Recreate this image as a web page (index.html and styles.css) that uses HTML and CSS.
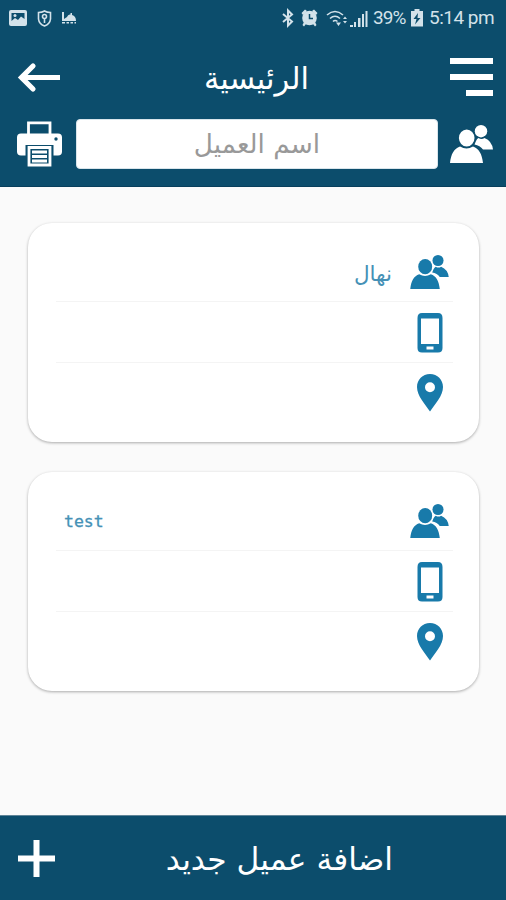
FILE: index.html
```html
<!doctype html>
<html lang="ar">
    <head>
        <meta charset="UTF-8" />
        <meta name="viewport" content="width=device-width, initial-scale=1.0" />
        <title>الرئيسية</title>
        <link rel="stylesheet" href="styles.css">
    </head>
    <body>
        <svg class="defs">
            <symbol id="people" viewBox="0 0 43 38">
                <circle cx="31" cy="6.2" r="6.2" />
                <path d="M26 16Q27 13.500 28.500 13Q31.500 15 34.500 13Q42 16 43 24.500H33Q30 20.500 24.500 19.500Z" />
                <ellipse cx="16.700" cy="13" rx="7.800" ry="8.600" />
                <path d="M0 38C1 29 4 23.500 10 21.500Q16.500 25.500 23 21.500C29 23.500 32 29 33 38Z" />
            </symbol>
            <symbol id="phone" viewBox="0 0 26 40">
                <path fill-rule="evenodd" d="M5 0H21Q25.500 0 25.500 5V35Q25.500 39.500 21 39.500H5Q.5 39.500 .5 35V5Q.5 0 5 0ZM4 5.500V31H22V5.500ZM9.500 33.500V36.500H16.500V33.500Z" />
            </symbol>
            <symbol id="pin" viewBox="0 0 26 38">
                <path fill-rule="evenodd" d="M13 0C5.500 0 0 5.700 0 13C0 22 8 30 13 37.500C18 30 26 22 26 13C26 5.700 20.500 0 13 0ZM13 8.300A5 5 0 1 1 13 18.300A5 5 0 1 1 13 8.300Z" />
            </symbol>
        </svg>

        <header class="header">
            <div class="status">
                <div class="status-left">
                    <svg width="18" height="17" viewBox="0 0 18 17">
                        <path fill-rule="evenodd" d="M2 0H16Q18 0 18 2V14Q18 16 16 16H2Q0 16 0 14V2Q0 0 2 0ZM2.500 3V11L6 8L9 10L12 6.500L15.500 9V3Z" />
                        <circle cx="6" cy="5.500" r="1.500" />
                    </svg>
                    <svg width="15" height="17" viewBox="0 0 15 17">
                        <path class="line" d="M7.500 1Q10 2.500 13.500 2.500V9Q13 14 7.500 16Q2 14 1.500 9V2.500Q5 2.500 7.500 1Z" />
                        <circle class="line" cx="7.500" cy="6.500" r="2" />
                        <path class="line" d="M7.500 8.500V13" />
                    </svg>
                    <svg width="15" height="12" viewBox="0 0 15 12">
                        <path d="M0 0H2V7L5 5Q6 2 8.500 2.500V1H10V3Q14 4 14 9H0ZM0 10H3V11.500H0ZM4.500 10H7V11.500H4.500ZM8.500 10H11V11.500H8.500ZM12.500 10H14V11.500H12.500Z" />
                    </svg>
                </div>
                <div class="status-right">
                    <svg class="bluetooth" width="12" height="18" viewBox="0 0 12 18">
                        <path d="M1 5L10 12.500L6 16.500V1.500L10 5.500L1 13" />
                    </svg>
                    <svg class="alarm" width="17" height="18" viewBox="0 0 17 18">
                        <path d="M.5 4L4 .5L6 2L2 6ZM16.500 4L13 .5L11 2L15 6ZM3 13L5 15L3 17.500L1.500 16ZM14 13L12 15L14 17.500L15.500 16Z" />
                        <circle cx="8.500" cy="9" r="7.300" />
                        <path class="hand" d="M8.500 5V9.500H12" />
                    </svg>
                    <svg class="wifi" width="22" height="17" viewBox="0 0 22 17">
                        <path class="line" d="M1 5Q9-2 17 5M4 8.500Q9 4 14 8.500M7 11.500Q9 9.500 11.500 11.500" />
                        <path d="M10 12.500L12.500 16L15 12.500ZM17 9L19 6.500L21 9ZM17 11H21L19 13.500Z" />
                    </svg>
                    <svg class="signal" width="18" height="17" viewBox="0 0 18 17">
                        <path d="M0 15H3V17H0ZM4 12H6V17H4ZM8 8H10.500V17H8ZM12 4H14V17H12ZM15.500 1H17.500V17H15.500Z" />
                    </svg>
                    <span class="percent">39%</span>
                    <svg class="battery" width="12" height="18" viewBox="0 0 12 18">
                        <path fill-rule="evenodd" d="M3.500 0H8.500V2H12V17.500H0V2H3.500ZM7 4L2.500 10H5.500L4 15.500L9.500 9H6.500Z" />
                    </svg>
                    <span class="time">5:14 pm</span>
                </div>
            </div>
            <div class="title-bar">
                <svg class="back" width="43" height="29" viewBox="0 0 43 29">
                    <path d="M15 3L3.500 14.500L15 26" stroke-linecap="round" />
                    <path d="M4 14.500H42" />
                </svg>
                <h1 class="title" dir="rtl">الرئيسية</h1>
                <div class="menu">
                    <i></i>
                    <i></i>
                    <i></i>
                </div>
            </div>
            <div class="search">
                <svg class="printer" width="45" height="46" viewBox="0 0 45 46">
                    <path class="frame" d="M11.500 13V1.800H33V13" />
                    <rect y="12.500" width="45" height="22" rx="4" />
                    <circle class="dark" cx="39" cy="18" r="1.700" />
                    <path class="dark" d="M8.500 24H36.500V35H8.500Z" />
                    <path class="frame" d="M12 26.500H33V44H12Z" />
                    <path class="lines" d="M15 31H30M15 35.500H30M15 40H30" />
                </svg>
                <div class="search-input" dir="rtl">اسم العميل</div>
                <svg class="people"><use href="#people" /></svg>
            </div>
        </header>

        <main class="list">
            <section class="card">
                <div class="row">
                    <span class="name" dir="rtl">نهال</span>
                    <svg class="people"><use href="#people" /></svg>
                </div>
                <div class="row">
                    <svg class="phone"><use href="#phone" /></svg>
                </div>
                <div class="row">
                    <svg class="pin"><use href="#pin" /></svg>
                </div>
            </section>
            <section class="card">
                <div class="row">
                    <span class="name name-latin">test</span>
                    <svg class="people"><use href="#people" /></svg>
                </div>
                <div class="row">
                    <svg class="phone"><use href="#phone" /></svg>
                </div>
                <div class="row">
                    <svg class="pin"><use href="#pin" /></svg>
                </div>
            </section>
        </main>

        <footer class="footer">
            <svg width="37" height="37" viewBox="0 0 37 37">
                <path d="M15.500 0H21.500V15.500H37V21.500H21.500V37H15.500V21.500H0V15.500H15.500Z" />
            </svg>
            <div class="add" dir="rtl">اضافة عميل جديد</div>
        </footer>
    </body>
</html>
```
FILE: styles.css
```css
* {
    box-sizing: border-box;
}

body {
    margin: 0;
    height: 900px;
    display: flex;
    flex-direction: column;
    overflow: hidden;
    background: #fafafa;
    font-family: "DejaVu Sans", sans-serif;
}

svg {
    display: block;
    flex: none;
    overflow: visible;
    fill: currentColor;
}

.defs {
    display: none;
}

.header {
    height: 187px;
    background: #0c4d6c;
    color: #fff;
    border-bottom: 1px solid #083f5c;
}

.status {
    display: flex;
    justify-content: space-between;
    height: 36px;
    padding: 0 10px 0 9px;
    color: #d3e2ea;
    font-family: Roboto, sans-serif;
    font-size: 19px;
}

.status-left,
.status-right {
    display: flex;
    align-items: center;
    height: 36px;
}

.status-left {
    gap: 10px;
}

.status .line {
    fill: none;
    stroke: currentColor;
    stroke-width: 1.6;
}

.bluetooth {
    fill: none;
    stroke: currentColor;
    stroke-width: 2;
    margin-right: 7px;
}

.alarm {
    margin-right: 8px;
}

.alarm .hand {
    fill: none;
    stroke: #0c4d6c;
    stroke-width: 1.5;
}

.wifi {
    margin-right: 2px;
}

.signal {
    margin-right: 5px;
}

.percent,
.time {
    white-space: nowrap;
    line-height: 36px;
}

.percent {
    width: 34px;
    letter-spacing: -0.9px;
    margin-right: 4px;
}

.time {
    width: 67px;
    margin-left: 6px;
    letter-spacing: -0.5px;
}

.title-bar {
    display: flex;
    align-items: center;
    justify-content: space-between;
    height: 82px;
    padding: 0 13px 0 18px;
}

.back {
    fill: none;
    stroke: currentColor;
    stroke-width: 5.2;
}

.title {
    margin: 0;
    padding: 3px 0 0 2px;
    font-size: 30.5px;
    font-weight: normal;
    line-height: 40px;
}

.menu {
    display: flex;
    flex-direction: column;
    align-items: flex-end;
    gap: 10px;
    width: 43px;
}

.menu i {
    width: 43px;
    height: 6px;
    background: #fff;
}

.menu i:last-child {
    width: 27px;
}

.search {
    display: flex;
    align-items: center;
    height: 52px;
    padding: 0 13px 0 17px;
}

.search-input {
    flex: 1;
    height: 50px;
    margin: 0 12px 0 14px;
    border: 1px solid #d9e5eb;
    border-radius: 4px;
    background: #fff;
    color: #999;
    font-size: 26.3px;
    line-height: 49px;
    text-align: center;
}

.printer .frame,
.printer .lines {
    fill: none;
    stroke: currentColor;
    stroke-width: 2.8;
}

.printer .dark {
    fill: #0c4d6c;
}

.people {
    width: 43px;
    height: 38px;
}

.list {
    flex: 1;
    display: flex;
    flex-direction: column;
    gap: 30px;
    padding: 36px 27px 0 28px;
}

.card {
    height: 219px;
    padding: 18px 26px 0 28px;
    border-radius: 24px;
    background: #fff;
    box-shadow: 0 1px 3px rgba(0, 0, 0, 0.32);
    color: #187aaa;
}

.row {
    display: flex;
    align-items: center;
    justify-content: flex-end;
    height: 61px;
    padding: 2px 4px 0 0;
    border-bottom: 1px solid #f4f4f4;
}

.row:last-child {
    height: 57px;
    border-bottom: 0;
}

.row .people {
    width: 39px;
    height: 34px;
}

.phone {
    width: 26px;
    height: 40px;
    margin-right: 6px;
}

.pin {
    width: 26px;
    height: 38px;
    margin-right: 6px;
}

.name {
    margin-right: 18px;
    padding-top: 2px;
    color: #4591b6;
    font-size: 21.5px;
}

.name-latin {
    margin-right: auto;
    margin-left: 8px;
    padding-top: 0;
    font-family: "DejaVu Sans Mono", monospace;
    font-size: 16.5px;
    -webkit-text-stroke: 0.3px #4591b6;
}

.footer {
    display: flex;
    align-items: center;
    height: 85px;
    padding: 0 113px 0 18px;
    border-top: 1px solid #5f8497;
    background: #0c4d6c;
    color: #fff;
}

.add {
    margin-left: auto;
    padding-top: 2px;
    font-size: 31.3px;
    line-height: 40px;
    white-space: nowrap;
}
```
